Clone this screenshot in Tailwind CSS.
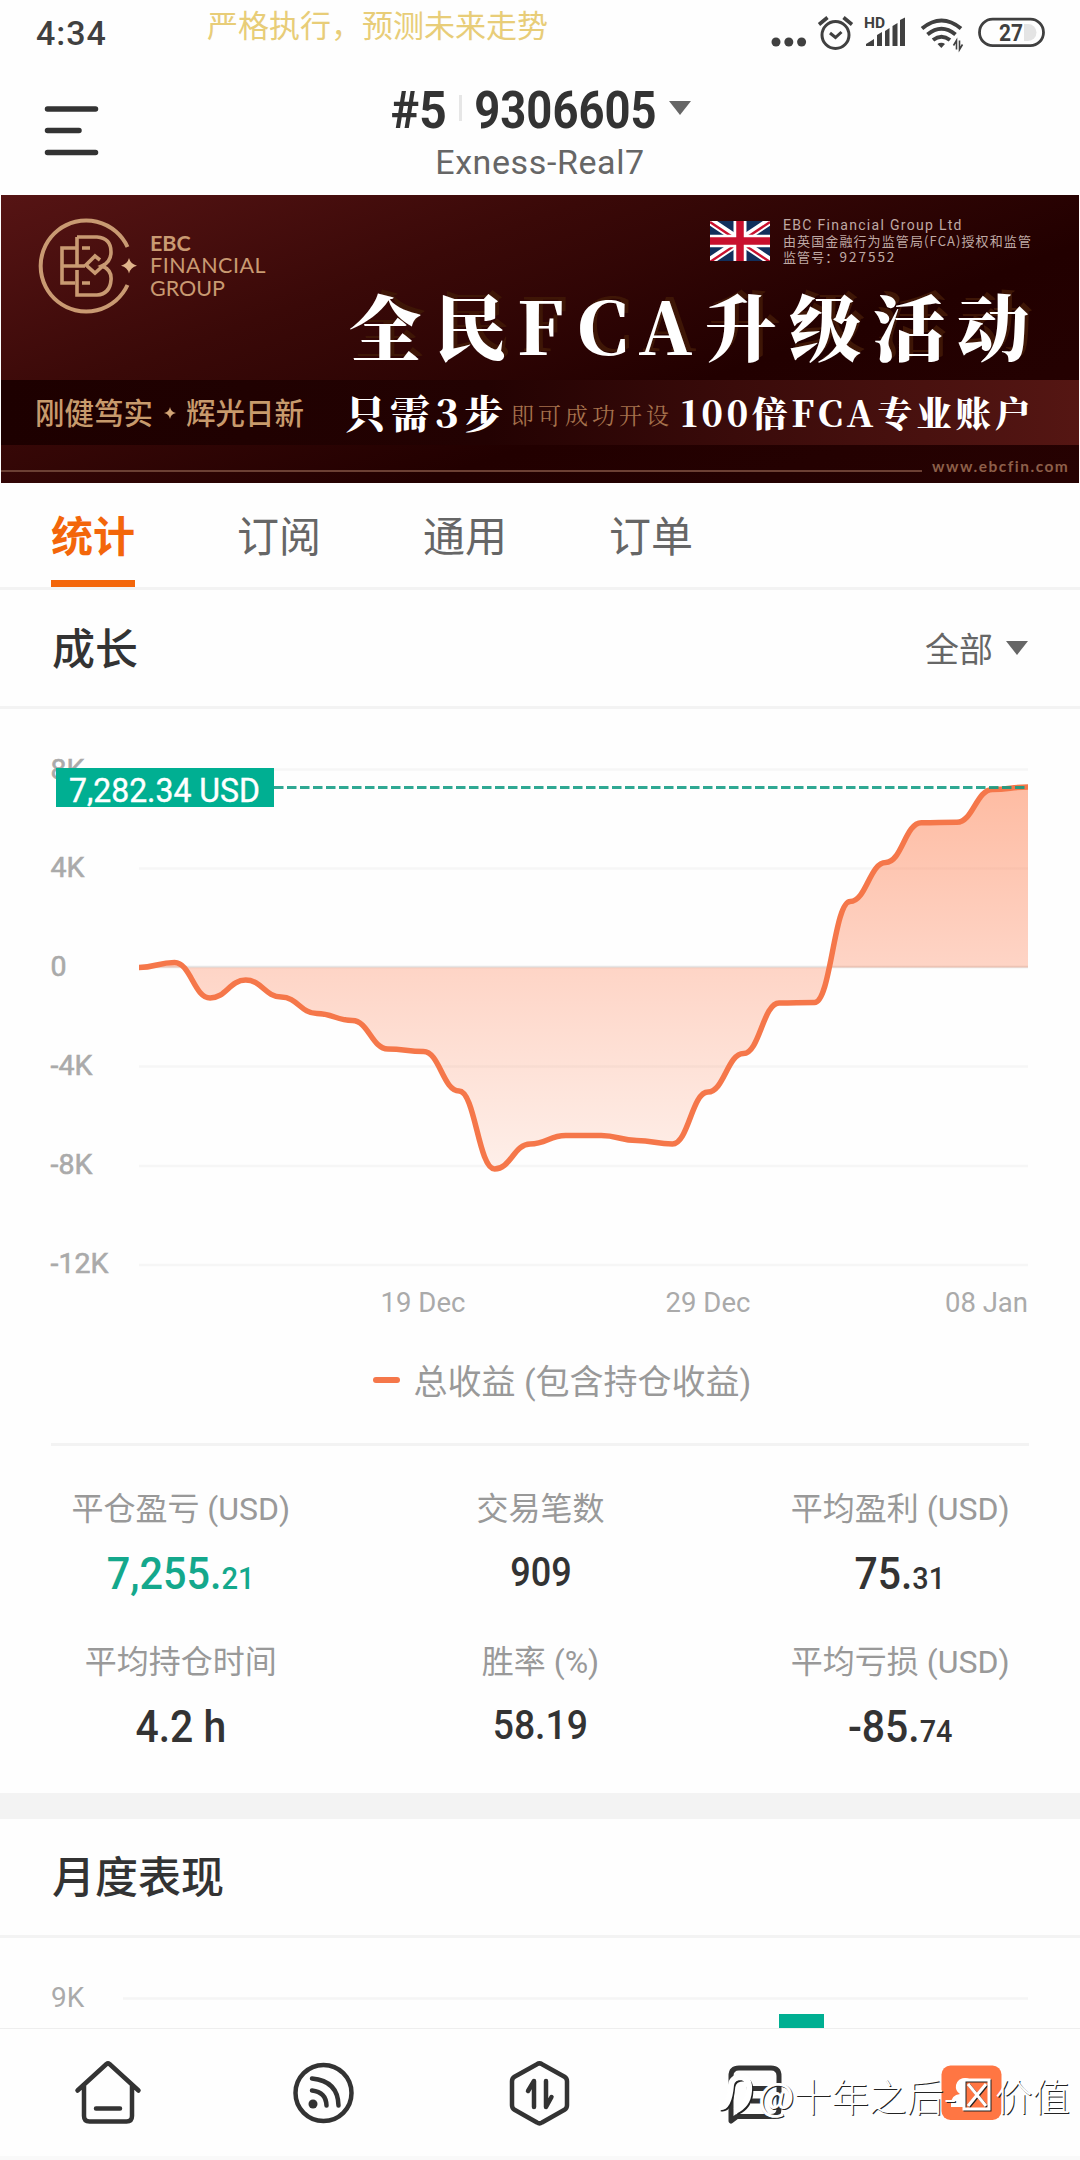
<!DOCTYPE html>
<html lang="zh-CN">
<head>
    <meta charset="UTF-8">
    <meta name="viewport" content="width=device-width, initial-scale=1.0">
    <title>Exness-Real7</title>
    <script src="https://cdn.jsdelivr.net/npm/@tailwindcss/browser@4"></script>
    <style>
        body { font-family: Roboto, 'Noto Sans CJK SC', sans-serif; }
        .serif { font-family: 'Noto Serif CJK SC', 'Liberation Serif', 'Noto Sans CJK SC', serif; }
        .cjk { font-family: 'Noto Sans CJK SC', sans-serif; }
    </style>
</head>
<body class="w-[1080px] h-[2160px] bg-[#fefefe] text-[#333] overflow-hidden flex flex-col">
    <!-- status bar -->
    <div class="h-[66px] shrink-0 flex items-start pl-[36px] pr-[35px] text-[#404040]">
        <div class="w-[171px] text-[34px] leading-[66px] font-medium tracking-[1px]">4:34</div>
        <div class="cjk text-[31px] leading-[48px] text-[#e8cd78] whitespace-nowrap">严格执行，预测未来走势</div>
        <svg class="ml-auto mt-[12px]" width="275" height="42" viewBox="770 12 275 42" fill="none" stroke="#404040">
            <g fill="#404040" stroke="none">
                <circle cx="776" cy="42" r="4.5"/><circle cx="788.8" cy="42" r="4.5"/><circle cx="801.6" cy="42" r="4.5"/>
                <path d="M866 46v-2q5-3 8-5v7zM877 46V35l5-3v14zM885 46V31l4.500-3v18zM892.500 46V26l5-3v23zM900 46V20l5-2.500V46z"/>
                <path d="M937.500 44a5 4 0 0 1 7.500 0l-3.700 4z"/>
            </g>
            <circle cx="835.500" cy="35" r="13.500" stroke-width="3"/>
            <path d="M830 33l5.500 4.500 6-5.500" stroke-width="3"/>
            <path d="M819 24.500l8.500-7M852 24.500l-8.500-7" stroke-width="3.600"/>
            <path d="M922 28.500q19.500-16 39 0M927.500 34.500q14-11.500 28 0M933 40q8.500-6.500 17 0" stroke-width="4"/>
            <path d="M956.500 49.500v-9l-3 5M959.500 40.500v9l3-5" stroke-width="1.600"/>
            <text x="864" y="27.500" font-size="15.500" font-weight="700" fill="#404040" stroke="none">HD</text>
            <path d="M1024 24h4a8.500 8.500 0 0 1 0 17h-4z" fill="#e4e4e4" stroke="none"/>
            <rect x="979.500" y="19.200" width="64" height="26.500" rx="13.200" stroke-width="2.800"/>
            <text x="999" y="40.700" font-size="23" font-weight="700" fill="#404040" stroke="none" textLength="24" lengthAdjust="spacingAndGlyphs">27</text>
        </svg>
    </div>

    <!-- account header -->
    <div class="h-[129px] shrink-0 flex pl-[44px]">
        <svg class="mt-[38px]" width="56" height="54" viewBox="0 0 56 54" stroke="#333" stroke-width="5.500" stroke-linecap="round">
            <path d="M3.500 5H51.500M3.500 26.500H35M3.500 48.500H51.500"/>
        </svg>
        <div class="w-[880px] flex flex-col items-center">
            <div class="flex items-center h-[66px] pt-[24px] ml-[2px]">
                <div class="w-[55px] flex justify-center"><span class="text-[51px] leading-[44px] font-bold scale-x-94">#5</span></div>
                <div class="w-[3px] h-[26px] bg-[#e6e6e6] ml-[12px] mr-[13px] -mt-[6px]"></div>
                <div class="w-[181px] flex justify-center"><span class="text-[51px] leading-[44px] font-bold scale-x-89">9306605</span></div>
                <svg class="ml-[13px] -mt-[6px]" width="22" height="14" viewBox="0 0 22 14"><path d="M0 0h22L11 14z" fill="#666"/></svg>
            </div>
            <div class="text-[34px] leading-[56px] h-[56px] text-[#666] pt-[2px] tracking-[0.6px]">Exness-Real7</div>
        </div>
    </div>

    <!-- banner -->
    <div class="relative h-[288px] shrink-0 mx-px flex flex-col overflow-hidden bg-[linear-gradient(160deg,#561414_0%,#3a0908_32%,#220000_65%,#260202_100%)]">
        <div class="h-[185px] shrink-0 flex">
            <svg class="mt-[22px] ml-[35px] shrink-0" width="110" height="100" viewBox="36 217 110 100" fill="none" stroke="#c99a72" stroke-width="3.600">
                <path d="M127.500 247A45.500 45.500 0 1 0 127.500 285" stroke-width="4"/>
                <path d="M77 237h20q14 1 14 15 0 10-9 14 10 4 9 14-1 14-14 15H77V270M77 237v29H85M77 248H62v35h13M62 266h16M82 248h8M82 283h8"/>
                <path d="M100 260l-5-4-9 9 9 8 10-9"/>
                <path d="M129 258q1.500 6 8 7.700-6.500 1.500-8 7.800-1.500-6.300-8-7.800 6.500-1.700 8-7.700z" fill="#e0b48b" stroke="none"/>
            </svg>
            <div class="mt-[37px] ml-[4px] w-[300px] shrink-0 text-[#c99a72] text-[21.500px] leading-[22.400px] font-[Lato]">
                <div class="font-bold">EBC</div>
                <div class="tracking-[0.5px]">FINANCIAL</div>
                <div>GROUP</div>
            </div>
            <svg class="mt-[26px] ml-[260px] shrink-0" width="60" height="40" viewBox="0 0 60 41" preserveAspectRatio="none">
                <path d="M0 0h60v41H0z" fill="#112f5c"/>
                <path d="M0 0l60 41M60 0L0 41" stroke="#fff" stroke-width="8"/>
                <path d="M0 1l60 41M60 1L0 42" stroke="#c8102e" stroke-width="2.400"/>
                <path d="M30 0v41M0 20.500h60" stroke="#fff" stroke-width="13"/>
                <path d="M30 0v41M0 20.500h60" stroke="#c8102e" stroke-width="7.500"/>
            </svg>
            <div class="mt-[23px] ml-[13px] shrink-0 text-[#bfa9a4] text-[13px] leading-[15.300px] whitespace-nowrap tracking-[1.100px]">
                <div class="text-[14px] tracking-[1.300px]">EBC Financial Group Ltd</div>
                <div class="cjk">由英国金融行为监管局(FCA)授权和监管</div>
                <div class="cjk">监管号：<span class="text-[13.500px] tracking-[2px]">927552</span></div>
            </div>
        </div>
        <!-- headline sits above the ribbon -->
        <div class="serif absolute left-[348px] top-[87px] h-[84px] leading-[84px] text-[72px] font-black text-white whitespace-nowrap flex [text-shadow:4px_-4px_0_#3e1606]">
            <span class="w-[86px]">全</span><span class="w-[82px]">民</span><span class="w-[60px]">F</span><span class="w-[61px]">C</span><span class="w-[67px]">A</span><span class="w-[84px]">升</span><span class="w-[84px]">级</span><span class="w-[84px]">活</span><span class="w-[72px]">动</span>
        </div>
        <div class="h-[65px] shrink-0 flex items-center pl-[34px] whitespace-nowrap bg-[linear-gradient(90deg,#1d0000_0%,#230202_45%,#3a0b0a_68%,#551613_100%)]">
            <div class="cjk w-[119px] text-[29.500px] leading-[58px] pb-[3px] font-medium text-[#c79a6c]">刚健笃实</div>
            <svg class="mx-[10px]" width="12" height="12" viewBox="0 0 12 12"><path d="M6 0q.8 5 6 6-5.200 1-6 6-.8-5-6-6 5.200-1 6-6z" fill="#d3a576"/></svg>
            <div class="cjk w-[160px] text-[29.500px] leading-[58px] pb-[3px] font-medium text-[#c79a6c]">辉光日新</div>
            <div class="serif w-[165px] text-[39px] font-black text-white tracking-[5.500px] leading-[58px] pb-[4px]">只需3步</div>
            <div class="serif w-[170px] text-[23px] text-[#a5714c] tracking-[4px] pt-[6px]">即可成功开设</div>
            <div class="serif text-[35.500px] font-black text-white tracking-[3.700px] leading-[58px] pb-[2px]">100倍FCA专业账户</div>
        </div>
        <div class="flex items-start">
            <div class="w-[921px] shrink-0 h-[2px] mt-[25px] bg-[#6c4034]"></div>
            <div class="ml-[10px] mt-[10px] text-[15.500px] leading-[22px] font-bold tracking-[1.500px] text-[#8d5f49] font-[Lato]">www.ebcfin.com</div>
        </div>
    </div>

    <!-- tabs -->
    <div class="h-[107px] shrink-0 border-b-[3px] border-[#f3f3f3] flex pl-[51px] gap-[102px] text-[42px] leading-[102px] text-[#666] cjk">
        <div class="w-[84px] h-[104px] text-[#f3660a] font-bold border-b-[7px] border-[#f3660a]">统计</div>
        <div class="w-[84px]">订阅</div>
        <div class="w-[84px]">通用</div>
        <div class="w-[84px]">订单</div>
    </div>

    <!-- growth -->
    <div class="h-[119px] shrink-0 border-b-[3px] border-[#f3f3f3] flex items-center justify-between pl-[52px] pr-[52px] cjk">
        <div class="text-[43px] leading-[110px] pb-[4px] font-medium">成长</div>
        <div class="flex items-center text-[34px] leading-[110px] text-[#666] gap-[13px]">
            <span>全部</span>
            <svg width="22" height="14" viewBox="0 0 22 14"><path d="M0 0h22L11 14z" fill="#666"/></svg>
        </div>
    </div>
    <svg class="shrink-0 block" width="1080" height="637" viewBox="0 709 1080 637">
        <defs>
            <linearGradient id="area" gradientUnits="userSpaceOnUse" x1="0" y1="787" x2="0" y2="1169">
                <stop offset="0" stop-color="#ff743f" stop-opacity=".48"/>
                <stop offset=".47" stop-color="#ff6e3c" stop-opacity=".29"/>
                <stop offset="1" stop-color="#ff743f" stop-opacity=".11"/>
            </linearGradient>
        </defs>
        <g stroke="#f6f6f6" stroke-width="2.500">
            <path d="M139 769.500H1028M139 868.500H1028M139 1066.500H1028M139 1166H1028M139 1265H1028"/>
            <path d="M139 967H1028" stroke="#e6e6e6"/>
        </g>
        <g font-size="28.500" fill="#aaa" stroke="#aaa" stroke-width=".6">
            <text x="50.500" y="778.500">8K</text><text x="50.500" y="877">4K</text><text x="50.500" y="976">0</text>
            <text x="50.500" y="1075">-4K</text><text x="50.500" y="1174">-8K</text><text x="50.500" y="1273">-12K</text>
        </g>
        <g font-size="27.500" fill="#aaa">
            <text x="423" y="1312" text-anchor="middle">19 Dec</text>
            <text x="708" y="1312" text-anchor="middle">29 Dec</text>
            <text x="1028" y="1312" text-anchor="end">08 Jan</text>
        </g>
        <path id="areaPath" fill="url(#area)"/>
        <path id="linePath" fill="none" stroke="#f5774a" stroke-width="5.500" stroke-linejoin="round"/>
        <path d="M274 787.500H1028" stroke="#129c84" stroke-opacity=".88" stroke-width="2.800" stroke-dasharray="9.500 3.500"/>
        <path d="M56 768h218v39H56z" fill="#00af92"/>
        <text x="69" y="802" font-size="32.500" fill="#fff" stroke="#fff" stroke-width=".4" textLength="191" lengthAdjust="spacingAndGlyphs">7,282.34 USD</text>
    </svg>
    <div class="h-[100px] shrink-0 mx-[51px] border-b-[3px] border-[#f3f3f3] flex justify-center text-[34px] leading-[72px] text-[#999] pl-[44px]">
        <div class="w-[27px] h-[6px] rounded-[3px] bg-[#f5774a] mt-[31px] mr-[14px]"></div>
        <div>总收益 (包含持仓收益)</div>
    </div>

    <!-- totals -->
    <div class="h-[347px] shrink-0 pt-[31px] pl-px grid grid-cols-3 auto-rows-[153px] text-center text-[32px] leading-[64px] text-[#999]">
        <div>平仓盈亏 (USD)<div class="text-[#14a88c] text-[44px] leading-[66px] font-medium"><span class="inline-block scale-x-94">7,255.<span class="text-[31px]">21</span></span></div></div>
        <div>交易笔数<div class="text-[#333] text-[41px] leading-[62px] font-medium"><span class="inline-block scale-x-88">909</span></div></div>
        <div>平均盈利 (USD)<div class="text-[#333] text-[44px] leading-[66px] font-medium"><span class="inline-block scale-x-93">75.<span class="text-[31px]">31</span></span></div></div>
        <div>平均持仓时间<div class="text-[#333] text-[44px] leading-[66px] font-medium"><span class="inline-block scale-x-93">4.2 h</span></div></div>
        <div>胜率 (%)<div class="text-[#333] text-[41px] leading-[62px] font-medium"><span class="inline-block scale-x-91">58.19</span></div></div>
        <div>平均亏损 (USD)<div class="text-[#333] text-[44px] leading-[66px] font-medium"><span class="inline-block scale-x-93">-85.<span class="text-[31px]">74</span></span></div></div>
    </div>

    <!-- monthly -->
    <div class="h-[145px] shrink-0 border-t-[26px] border-b-[3px] border-[#f3f3f3] pl-[52px] cjk text-[43px] leading-[111px] font-medium">月度表现</div>
    <svg class="shrink-0 block" width="1080" height="90" viewBox="0 1938 1080 90">
        <path d="M123 1998.500H1028" stroke="#f5f5f5" stroke-width="2.500"/>
        <text x="51" y="2007" font-size="28" fill="#aaa">9K</text>
        <path d="M779 2014h45v14h-45z" fill="#00af92"/>
    </svg>

    <!-- bottom navigation -->
    <div class="relative h-[132px] shrink-0 border-t border-b-[4px] border-t-[#eee] border-b-[#f9f9f9] bg-[#fefefe] grid grid-cols-5 justify-items-center items-start pt-[24px]">
        <svg width="80" height="80" viewBox="0 0 80 80" fill="none" stroke="#333" stroke-width="4.500" stroke-linecap="round" stroke-linejoin="round">
            <path d="M9.500 37.500L38.500 11q1.500-1.200 3 0L70.500 37.500M16 33v30q0 5.500 5.500 5.500h37q5.500 0 5.500-5.500V33M28 55.500h24"/>
        </svg>
        <svg width="80" height="80" viewBox="0 0 80 80" fill="none" stroke="#333" stroke-width="4.500" stroke-linecap="round">
            <circle cx="39.500" cy="40" r="28"/>
            <path d="M28 25.500q26 2.500 26.500 27M28 37.500q14 1.500 14.500 15"/>
            <circle cx="29" cy="51" r="4.500" fill="#333" stroke="none"/>
        </svg>
        <svg width="80" height="80" viewBox="0 0 80 80" fill="none" stroke="#333" stroke-width="4.500" stroke-linecap="round" stroke-linejoin="round">
            <path d="M37 11.200q2.500-1.700 5 0l22.500 12.500q2.500 1.500 2.500 4.500v24q0 3-2.500 4.500L42 69.500q-2.500 1.700-5 0L14.500 56.700q-2.500-1.500-2.500-4.500v-24q0-3 2.500-4.500z"/>
            <path d="M34 54V28l-6 10M46 28v26l5.500-10"/>
        </svg>
        <svg width="80" height="80" viewBox="0 0 80 80" fill="none" stroke="#333" stroke-width="5" stroke-linejoin="round">
            <path d="M15 68V23q0-8 8-8h32q8 0 8 8v33q0 7.500-8 7.500H21z"/>
            <path d="M30 35.500h22M35 48h13"/>
        </svg>
        <svg width="80" height="80" viewBox="0 0 80 80">
            <rect x="9.500" y="12.500" width="60" height="54.500" rx="9" fill="#ff7643"/>
            <path d="M19 51q0-9 9-10-5-3-4-9 2-7 9-7 5 0 7 4l19-3v12l-10 4q8 3 8 12H19z" fill="#fff"/>
            <path d="M32 28h28v28H32z" fill="#ff7643"/>
        </svg>
        <!-- signature over the icons -->
        <div class="absolute left-[718px] top-[41px] flex items-center h-[50px] text-[37.500px] leading-[50px] cjk text-white font-light whitespace-nowrap [text-shadow:1px_1px_0_#222]">
            <svg width="40" height="50" viewBox="718 2072 40 50" fill="none">
                <path d="M721 2111q10 2 12-22 1-8 11-8 8 2 7 14-1 14-14 20" stroke="#222" stroke-width="4.500"/>
                <path d="M719 2109q10 2 12-22 1-8 11-8 8 2 7 14-1 14-14 20" stroke="#fff" stroke-width="6"/>
            </svg>
            <span class="w-[36px] font-medium">@</span><span>十年之后</span><span class="w-[15px]">-</span>
            <svg class="mx-[2px]" width="32" height="36" viewBox="0 0 32 36" fill="none">
                <path d="M4 4h25v29H4zM8 8l18 22M26 8L8 30" stroke="#222" stroke-width="3"/>
                <path d="M3 3h25v29H3zM7 7l18 22M25 7L7 29" stroke="#fff" stroke-width="3"/>
            </svg>
            <span>价值</span>
        </div>
    </div>

    <script>
        // y pixel of each daily point, evenly spaced from x = 139 to x = 1028
        const points = [967.5, 962.5, 998, 980, 997, 1013.5, 1020.5, 1049, 1051.5, 1091, 1169, 1144, 1135.5, 1135.5, 1140.5, 1144, 1092, 1053.5, 1003, 1002.4, 901.5, 862.5, 822.7, 822.3, 789.4, 787];
        const step = (1028 - 139) / (points.length - 1);
        const c = step * 0.45;
        let d = `M139 ${points[0]}`;
        for (let i = 1; i < points.length; i++) {
            const x0 = 139 + step * (i - 1);
            const x1 = 139 + step * i;
            d += `C${x0 + c} ${points[i - 1]} ${x1 - c} ${points[i]} ${x1} ${points[i]}`;
        }
        document.getElementById('linePath').setAttribute('d', d);
        document.getElementById('areaPath').setAttribute('d', d + 'V967.5H139Z');
    </script>
</body>
</html>
